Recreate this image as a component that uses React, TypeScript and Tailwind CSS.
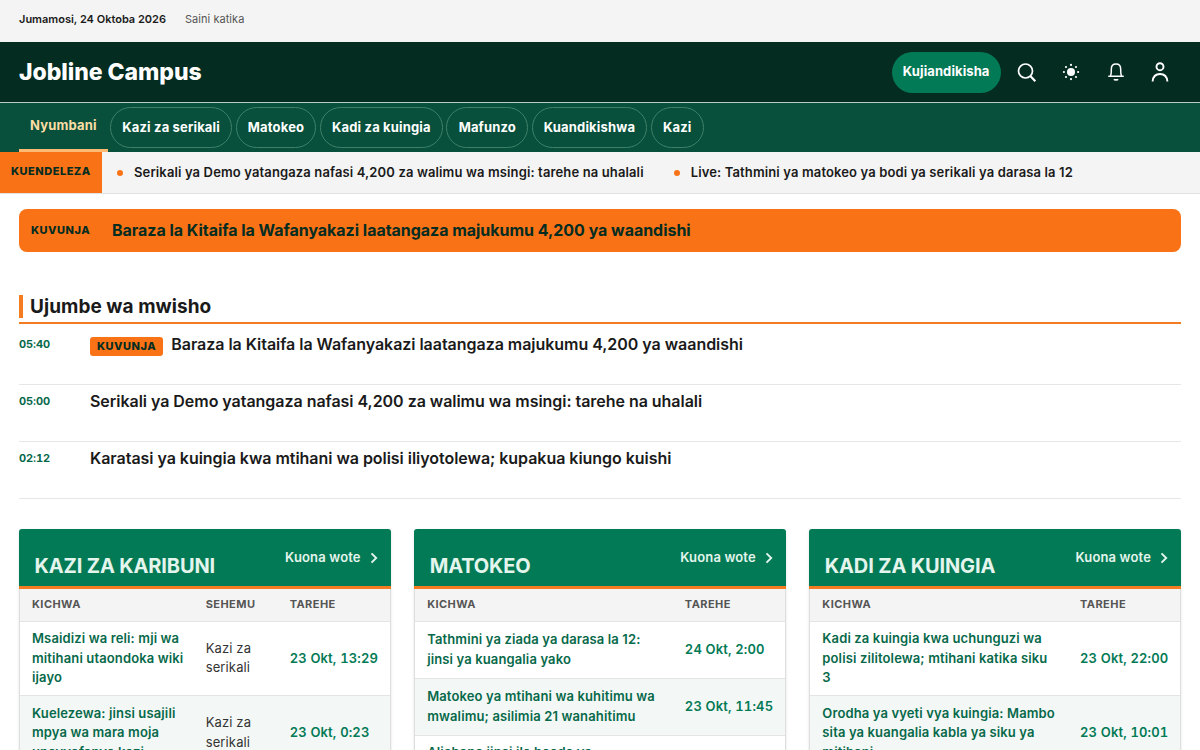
import type { ReactNode } from "react";

const navItems = ["Kazi za serikali", "Matokeo", "Kadi za kuingia", "Mafunzo", "Kuandikishwa", "Kazi"];

const ticker = [
  "Serikali ya Demo yatangaza nafasi 4,200 za walimu wa msingi: tarehe na uhalali",
  "Live: Tathmini ya matokeo ya bodi ya serikali ya darasa la 12",
];

const latest = [
  { time: "05:40", title: "Baraza la Kitaifa la Wafanyakazi laatangaza majukumu 4,200 ya waandishi", breaking: true },
  { time: "05:00", title: "Serikali ya Demo yatangaza nafasi 4,200 za walimu wa msingi: tarehe na uhalali" },
  { time: "02:12", title: "Karatasi ya kuingia kwa mtihani wa polisi iliyotolewa; kupakua kiungo kuishi" },
];

type Row = { title: string; section?: string; date: string };

const boards: { heading: string; rows: Row[] }[] = [
  {
    heading: "Kazi za karibuni",
    rows: [
      { title: "Msaidizi wa reli: mji wa mitihani utaondoka wiki ijayo", section: "Kazi za serikali", date: "23 Okt, 13:29" },
      { title: "Kuelezewa: jinsi usajili mpya wa mara moja unavyofanya kazi", section: "Kazi za serikali", date: "23 Okt, 0:23" },
    ],
  },
  {
    heading: "Matokeo",
    rows: [
      { title: "Tathmini ya ziada ya darasa la 12: jinsi ya kuangalia yako", date: "24 Okt, 2:00" },
      { title: "Matokeo ya mtihani wa kuhitimu wa mwalimu; asilimia 21 wanahitimu", date: "23 Okt, 11:45" },
      { title: "Alichapa jinsi ila baada ya kutangazwa kwa matokeo ya mtihani wa kidato cha nne", date: "23 Okt, 9:10" },
    ],
  },
  {
    heading: "Kadi za kuingia",
    rows: [
      { title: "Kadi za kuingia kwa uchunguzi wa polisi zilitolewa; mtihani katika siku 3", date: "23 Okt, 22:00" },
      { title: "Orodha ya vyeti vya kuingia: Mambo sita ya kuangalia kabla ya siku ya mitihani", date: "23 Okt, 10:01" },
    ],
  },
];

function IconButton({ label, children }: { label: string; children: ReactNode }) {
  return (
    <button aria-label={label} className="flex size-10 items-center justify-center text-white">
      {children}
    </button>
  );
}

function SearchIcon() {
  return (
    <svg width="20" height="22" viewBox="0 0 20 22" fill="none" stroke="currentColor">
      <circle cx="8.5" cy="10" r="7" strokeWidth="1.700" />
      <path d="M13.3 15.1l5 5.2" strokeWidth="2.2" />
    </svg>
  );
}

function SunIcon() {
  return (
    <svg width="18" height="18" viewBox="0 0 18 18" fill="currentColor">
      <circle cx="9" cy="9" r="4" />
      <circle cx="9" cy="1.9" r="1.1" />
      <circle cx="9" cy="16.1" r="1.1" />
      <circle cx="1.9" cy="9" r="1.1" />
      <circle cx="16.1" cy="9" r="1.1" />
      <circle cx="4" cy="4" r="1.1" />
      <circle cx="14" cy="4" r="1.1" />
      <circle cx="4" cy="14" r="1.1" />
      <circle cx="14" cy="14" r="1.1" />
    </svg>
  );
}

function BellIcon() {
  return (
    <svg width="18" height="20" viewBox="0 0 18 20" fill="none" stroke="currentColor" strokeWidth="1.5">
      <path d="M1.8 14.3h14.4M3.4 14.1c.7-1.300.9-2.600.9-5V7.200C4.300 4 6.200 2 9 2s4.700 2 4.700 5.200v1.900c0 2.400.2 3.700.9 5" strokeLinecap="round" />
      <path d="M7 17.200c.5.900 3.500.900 4 0" strokeWidth="1.8" />
    </svg>
  );
}

function UserIcon() {
  return (
    <svg width="18" height="22" viewBox="0 0 18 22" fill="none" stroke="currentColor" strokeWidth="1.9">
      <circle cx="9" cy="5.7" r="3.5" />
      <path d="M1.6 20.500c.4-4.900 3.500-7.500 7.400-7.500s7 2.600 7.400 7.500" />
    </svg>
  );
}

function Board({ heading, rows }: { heading: string; rows: Row[] }) {
  const hasSection = rows.some((row) => row.section);
  return (
    <section className="rounded-[3px] border border-[#dedede] bg-white shadow-sm">
      <header className="-mx-px -mt-px flex h-[60px] justify-between rounded-t-[3px] border-b-[3px] border-[#f47b20] bg-[#037a56] pr-3 pl-[15.5px]">
        <h2 className="pt-[23px] text-[20px] leading-7 font-bold tracking-[-0.14px] text-[#e3f5ec] uppercase">{heading}</h2>
        <a className="flex h-[58px] items-center gap-2 text-[13px] font-semibold tracking-[0.15px] text-[#e3f5ec]">
          Kuona wote
          <svg width="10" height="12" viewBox="0 0 10 12" fill="none" stroke="currentColor" strokeWidth="1.9">
            <path d="M2.5 1.3L7.2 6l-4.7 4.7" />
          </svg>
        </a>
      </header>
      <table className="w-full table-fixed text-left">
        <colgroup>
          <col />
          {hasSection && <col className="w-[84px]" />}
          <col className="w-[112px]" />
        </colgroup>
        <thead>
          <tr className="h-8 border-b border-[#e4e4e4] bg-[#f4f4f4] text-[11px] tracking-[0.44px] text-[#555] uppercase">
            <th className="px-3 pb-px font-bold">Kichwa</th>
            {hasSection && <th className="px-3 pb-px font-bold">Sehemu</th>}
            <th className="px-3 pb-px font-bold">Tarehe</th>
          </tr>
        </thead>
        <tbody>
          {rows.map((row) => (
            <tr key={row.title} className="h-[57px] border-b border-[#e4e4e4] text-[13px] leading-[19.5px] even:bg-[#f3f8f6]">
              <td className={`py-[7.5px] pl-3 font-semibold tracking-[0.13px] text-[#07694a] ${hasSection ? "pr-1.5" : "pr-3"}`}>{row.title}</td>
              {hasSection && <td className="px-3 tracking-[0.13px] text-[#333]">{row.section}</td>}
              <td className="pl-3 font-semibold tracking-[0.15px] whitespace-nowrap text-[#037a56] tabular-nums">{row.date}</td>
            </tr>
          ))}
        </tbody>
      </table>
    </section>
  );
}

export default function App() {
  return (
    <div className="h-[750px] overflow-hidden bg-white font-['Inter',sans-serif] text-[#1a1a1a]">
      <div className="flex h-[42px] items-center gap-[19px] bg-[#f4f4f4] px-[19px] pb-[3px] text-[11px]">
        <span className="font-semibold">Jumamosi, 24 Oktoba 2026</span>
        <a className="tracking-[0.05px] text-[#555]">Saini katika</a>
      </div>

      <header className="flex h-[61px] items-center justify-between border-b border-[#b5cdc4] bg-[#042c21] pr-5 pl-[19px]">
        <a className="text-[23px] font-extrabold tracking-[-0.05px] text-white">Jobline Campus</a>
        <div className="flex items-center gap-[4.5px]">
          <button className="mr-[1.5px] h-[41px] rounded-full bg-[#037a56] px-[11px] text-[13px] font-bold tracking-[0.1px] text-white">Kujiandikisha</button>
          <IconButton label="Tafuta"><SearchIcon /></IconButton>
          <IconButton label="Mandhari"><SunIcon /></IconButton>
          <IconButton label="Arifa"><BellIcon /></IconButton>
          <IconButton label="Akaunti"><UserIcon /></IconButton>
        </div>
      </header>

      <nav className="flex h-[49px] items-center gap-[3.5px] bg-[#08503b] px-[19px] text-[13px] font-bold tracking-[0.16px] text-white">
        <a className="-mr-px flex h-full items-center border-b-[3px] border-[#fdba74] px-[11px] text-[#fbdda6]">Nyumbani</a>
        {navItems.map((item) => (
          <a key={item} className="flex h-[41px] items-center rounded-full border border-[#3f8069] px-[11.2px]">
            {item}
          </a>
        ))}
      </nav>

      <div className="flex h-[42px] border-b border-[#e2e2e2] bg-[#f4f4f4]">
        <span className="flex w-[102px] items-center bg-[#f97316] px-[11px] pb-0.5 text-[11px] font-extrabold tracking-[0.5px] text-[#042c21]">KUENDELEZA</span>
        <div className="flex items-center gap-[30px] pl-[15px] text-[13px] font-semibold tracking-[0.13px]">
          {ticker.map((item) => (
            <span key={item} className="flex items-center gap-[11px]">
              <i className="size-1.5 rounded-full bg-[#f97316]" />
              {item}
            </span>
          ))}
        </div>
      </div>

      <main className="px-[19px] pt-[15px]">
        <div className="flex h-[43px] items-center rounded-lg bg-[#f97316] px-3 pb-px text-[#042c21]">
          <span className="w-[81px] text-[11px] font-extrabold tracking-[0.5px]">KUVUNJA</span>
          <a className="text-[16px] font-bold tracking-[-0.03px]">{latest[0].title}</a>
        </div>

        <section className="mt-[43px]">
          <div className="border-b-2 border-[#f47b20] pb-1">
            <h2 className="border-l-4 border-[#f47b20] pl-[7px] text-[19px] leading-[23px] font-bold tracking-[0.05px]">Ujumbe wa mwisho</h2>
          </div>
          <ul className="pt-1">
            {latest.map((item) => (
              <li key={item.time} className="flex h-[57px] border-b border-[#e6e6e6] pt-1">
                <time className="w-[71px] pt-1 text-[11px] leading-[17px] font-bold tracking-[-0.1px] text-[#07694a] tabular-nums">{item.time}</time>
                <div className="flex items-start text-[16px] leading-6 font-semibold tracking-[-0.035px]">
                  {item.breaking && (
                    <span className="mt-[5px] mr-2 h-[19px] rounded-[3px] bg-[#f97316] px-[7px] text-[11px] leading-[19px] font-extrabold tracking-[0.5px] text-[#042c21]">KUVUNJA</span>
                  )}
                  <a>{item.title}</a>
                </div>
              </li>
            ))}
          </ul>
        </section>

        <div className="mt-[30px] grid grid-cols-3 items-start gap-[23.5px]">
          {boards.map((board) => (
            <Board key={board.heading} {...board} />
          ))}
        </div>
      </main>
    </div>
  );
}
